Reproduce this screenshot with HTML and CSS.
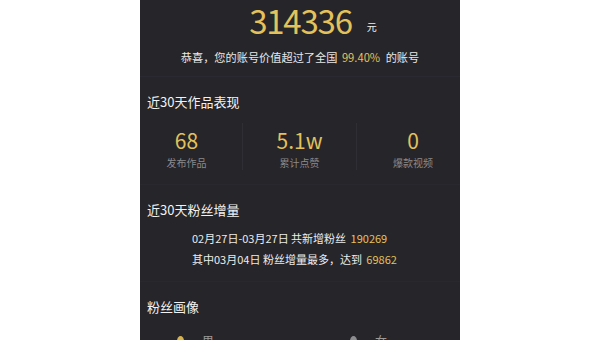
FILE: index.html
```html
<!DOCTYPE html>
<html lang="zh">
<head>
<meta charset="utf-8">
<link rel="stylesheet" href="styles.css">
</head>
<body>
<div class="panel">
  <section class="hero">
    <div class="amount"><span class="num">314336</span><span class="unit">元</span></div>
    <p class="rank">恭喜，您的账号价值超过了全国 <em class="pct">99.40%</em> 的账号</p>
  </section>
  <section class="block">
    <h2 class="title">近30天作品表现</h2>
    <div class="stats">
      <div class="stat stat-left"><span class="value">68</span><span class="label">发布作品</span></div>
      <div class="stat stat-mid"><span class="value">5.1w</span><span class="label">累计点赞</span></div>
      <div class="stat stat-right"><span class="value">0</span><span class="label">爆款视频</span></div>
    </div>
  </section>
  <section class="block block-growth">
    <h2 class="title">近30天粉丝增量</h2>
    <div class="growth">
      <p>02月27日-03月27日 共新增粉丝 <em>190269</em></p>
      <p>其中03月04日 粉丝增量最多，达到 <em>69862</em></p>
    </div>
  </section>
  <section class="block block-portrait">
    <h2 class="title">粉丝画像</h2>
    <div class="gender">
      <div class="g-item"><span class="g-icon male"></span><span class="g-text">男</span></div>
      <div class="g-item"><span class="g-icon female"></span><span class="g-text">女</span></div>
    </div>
  </section>
</div>
</body>
</html>
```
FILE: styles.css
```css
html, body {
  margin: 0;
  padding: 0;
  background: #ffffff;
  height: 340px;
  overflow: hidden;
}
body {
  font-family: "Noto Sans CJK SC", "Noto Sans", sans-serif;
}
.panel {
  width: 320px;
  margin: 0 auto;
  background: #262529;
  min-height: 340px;
  color: #ececec;
}
.hero {
  height: 77px;
  box-sizing: border-box;
  padding-top: 4px;
  border-bottom: 1px solid #2a2931;
}
.amount {
  display: flex;
  justify-content: center;
  align-items: baseline;
  padding-left: 26px;
}
.num {
  font-size: 33px;
  line-height: 33px;
  color: #e3c15b;
  letter-spacing: -1.2px;
}
.unit {
  font-size: 10px;
  margin-left: 15px;
  color: #f0f0f0;
  position: relative;
  bottom: 3px;
}
.rank {
  margin: 12px 0 0;
  text-align: center;
  font-size: 11.2px;
  line-height: 16px;
  color: #e8e8e8;
}
.rank em, .growth em {
  font-style: normal;
  color: #e3c15b;
}
.rank .pct {
  margin: 0 3px 0 2px;
}
.block {
  padding: 16px 0 14px;
  border-bottom: 1px solid #29282e;
}
.title {
  margin: 0;
  padding-left: 7px;
  font-size: 13px;
  line-height: 18px;
  font-weight: normal;
  color: #f2f2f2;
}
.stats {
  margin-top: 12px;
  display: grid;
  grid-template-columns: 103px 114px 103px;
}
.stat {
  display: flex;
  flex-direction: column;
  align-items: center;
  padding-top: 4px;
}
.stat-left { padding-right: 9px; border-right: 1px solid #2f2e34; }
.stat-mid { border-right: 1px solid #2f2e34; }
.stat-right { padding-left: 9px; }
.value {
  font-size: 21px;
  line-height: 26px;
  color: #e3c15b;
}
.label {
  margin-top: 3px;
  font-size: 10px;
  line-height: 14px;
  color: #8a8a8c;
}
.block-growth {
  padding-bottom: 11px;
}
.growth {
  margin-top: 9px;
  padding-left: 52px;
}
.growth p {
  margin: 0;
  font-size: 11px;
  line-height: 21px;
  color: #ececec;
}
.growth em {
  margin-left: 2px;
}
.block-portrait {
  padding-top: 16px;
  border-bottom: none;
}
.gender {
  margin-top: 16px;
  display: grid;
  grid-template-columns: 173px 1fr;
  padding-left: 37px;
}
.g-item {
  display: flex;
  align-items: center;
  gap: 18px;
}
.g-icon {
  width: 7px;
  height: 10px;
  border-radius: 50% 50% 40% 40%;
}
.g-icon.male { background: #d9b24a; }
.g-icon.female { background: #8d8d90; }
.g-text {
  font-size: 12px;
  line-height: 18px;
  color: #9a9a9c;
}
```
